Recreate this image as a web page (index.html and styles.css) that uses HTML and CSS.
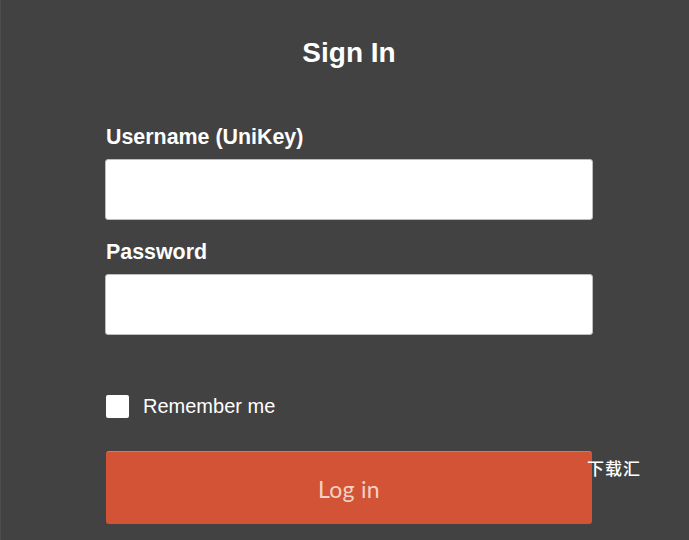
FILE: index.html
```html
<!DOCTYPE html>
<html lang="en">
<head>
  <meta charset="UTF-8" />
  <meta name="viewport" content="width=device-width, initial-scale=1.0"/>
  <title>Sign In</title>
  <link rel="stylesheet" href="styles.css">
</head>
<body>
  <div class="container">
    <h2>Sign In</h2>
    <form id="login-form">
      <label class="field-label">Username (UniKey)</label>
      <input type="text" name="username" class="text-input" />

      <label class="field-label">Password</label>
      <input type="password" name="password" class="text-input" />

      <label class="remember">
        <span class="check-box"></span>
        Remember me
      </label>

      <div class="submit-row">
        <button type="submit" class="login-btn">Log in</button>
        <span class="watermark">下载汇</span>
      </div>
    </form>
  </div>
</body>
</html>
```
FILE: styles.css
```css
body {
  font-family: "Liberation Sans", Arial, sans-serif;
  background: #424242;
  margin: 0;
  padding: 0;
  height: 540px;
  overflow: hidden;
  border-left: 1px solid #4e4e4e;
}

.container {
  width: 488px;
  padding: 38px 0 0 104px;
}

h2 {
  text-align: center;
  color: #ffffff;
  font-size: 28px;
  font-weight: bold;
  margin: 0 0 57px 0;
  line-height: 30px;
}

.field-label {
  display: block;
  color: #ffffff;
  font-size: 21.4px;
  font-weight: bold;
  line-height: 24px;
  margin-bottom: 10px;
  padding-left: 1px;
}

.text-input {
  display: block;
  box-sizing: border-box;
  width: 488px;
  height: 61px;
  margin: 0 0 20px 0;
  border: 1px solid #bdbdbd;
  border-radius: 3px;
  background: #ffffff;
  font-size: 18px;
}

.remember {
  display: flex;
  align-items: center;
  gap: 14px;
  height: 23px;
  color: #ffffff;
  font-size: 20px;
  margin: 60px 0 33px 1px;
}

.check-box {
  width: 23px;
  height: 23px;
  background: #ffffff;
  border-radius: 2px;
}

.submit-row {
  position: relative;
}

.login-btn {
  display: block;
  box-sizing: border-box;
  width: 486px;
  height: 73px;
  margin-left: 1px;
  border: none;
  border-top: 1px solid #e0705a;
  border-radius: 3px;
  background: #d35336;
  color: #f3d2c4;
  font-family: "Lato", "Open Sans", sans-serif;
  font-size: 23px;
  letter-spacing: 0.3px;
  padding-top: 2px;
}

.watermark {
  position: absolute;
  top: 4px;
  left: 482px;
  white-space: nowrap;
  color: #ffffff;
  font-family: "Noto Sans CJK SC", sans-serif;
  font-size: 17px;
  font-weight: 500;
  letter-spacing: 1px;
}
```
